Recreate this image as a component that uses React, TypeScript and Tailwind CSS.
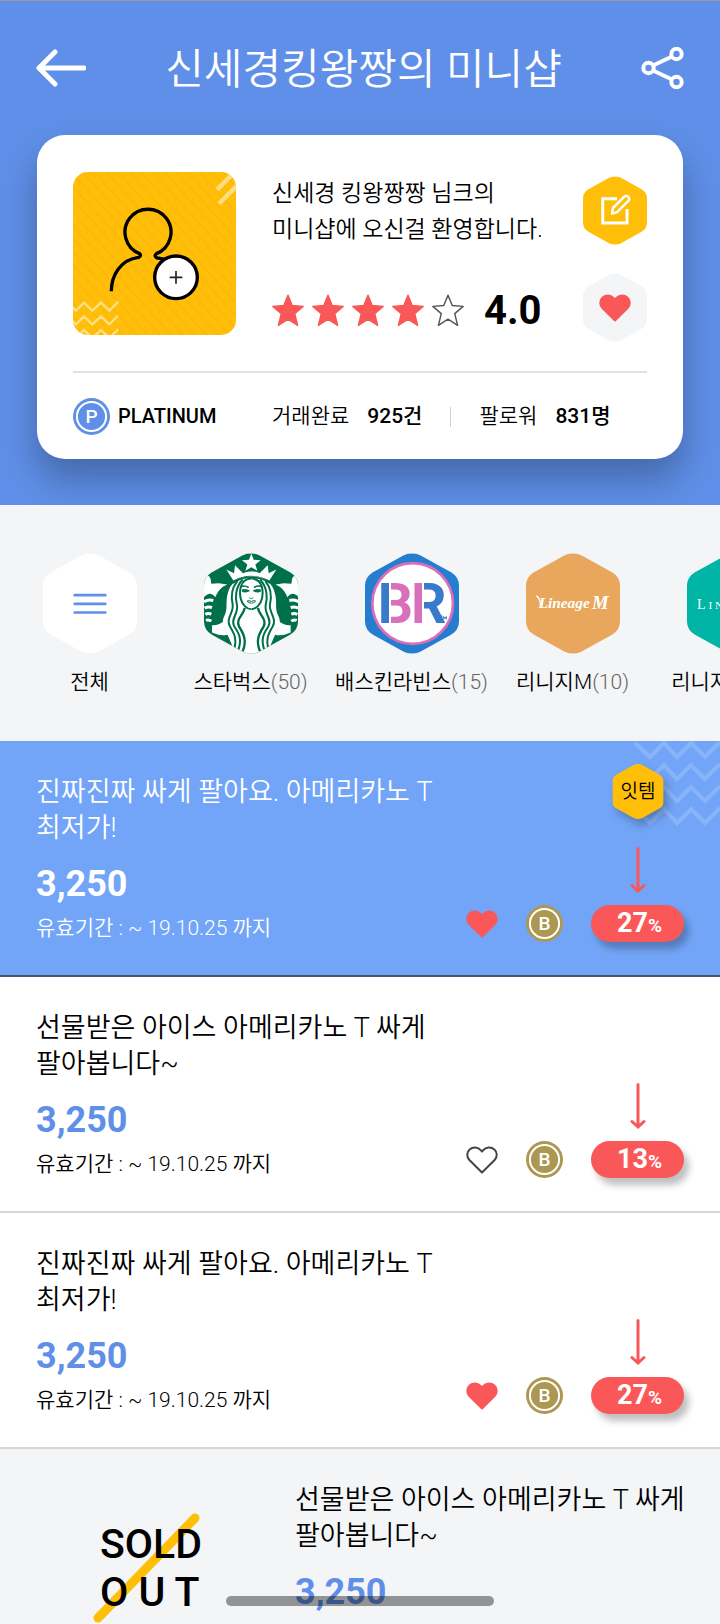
import type { ReactNode } from 'react';

interface Listing {
  title: string;
  price: string;
  expires: string;
  discount: number;
  liked: boolean;
  featured?: boolean;
}

const HEX_PATH =
  'M115 7Q141 -7 167 7L258 57Q282 71 282 98V204Q282 231 258 245L167 295Q141 309 115 295L24 245Q0 231 0 204V98Q0 71 24 57Z';

const listings: Listing[] = [
  {
    title: '진짜진짜 싸게 팔아요. 아메리카노 T 최저가!',
    price: '3,250',
    expires: '유효기간 : ~ 19.10.25 까지',
    discount: 27,
    liked: true,
    featured: true,
  },
  {
    title: '선물받은 아이스 아메리카노 T 싸게 팔아봅니다~',
    price: '3,250',
    expires: '유효기간 : ~ 19.10.25 까지',
    discount: 13,
    liked: false,
  },
  {
    title: '진짜진짜 싸게 팔아요. 아메리카노 T 최저가!',
    price: '3,250',
    expires: '유효기간 : ~ 19.10.25 까지',
    discount: 27,
    liked: true,
  },
];

function Heart({ filled }: { filled: boolean }) {
  return (
    <svg
      viewBox="0 0 32 28"
      className={filled ? 'block w-8 fill-[#f95758] stroke-[#f95758]' : 'block w-8 fill-none stroke-[#444444]'}
      strokeWidth="2"
      strokeLinejoin="round"
    >
      <path d="M16 26.5L3.4 14C0.4 10.8 0.6 6 3.6 3.4C7 0.5 12 0.8 15 4.4L16 5.6L17 4.4C20 0.8 25 0.5 28.4 3.4C31.4 6 31.6 10.8 28.6 14Z" />
    </svg>
  );
}

function Star({ filled }: { filled: boolean }) {
  return (
    <svg
      viewBox="0 0 31 32"
      className={filled ? 'w-8 fill-[#f95758] stroke-[#f95758]' : 'w-8 fill-none stroke-[#555555]'}
      strokeWidth="1.4"
      strokeLinejoin="round"
    >
      <path d="M15.5 1.2L19.6 11.2L30.2 12L22 19L24.8 30.4L15.5 24.4L6.2 30.4L9 19L0.8 12L11.4 11.2Z" />
    </svg>
  );
}

function Coin({ letter, color }: { letter: string; color: string }) {
  return (
    <svg viewBox="0 0 37 37" className="block w-[37px] shrink-0">
      <circle cx="18.5" cy="18.5" r="18.5" fill={color} />
      <circle cx="18.5" cy="18.5" r="14.6" fill="none" stroke="#fff" strokeWidth="2" />
      <text x="18.5" y="25" textAnchor="middle" fontSize="19" fontWeight="500" fill="#fff">
        {letter}
      </text>
    </svg>
  );
}

function DownArrow() {
  return (
    <svg viewBox="0 0 16 46" className="block h-[46px] w-4" fill="none" stroke="#f95758" strokeWidth="3" strokeLinecap="round">
      <path d="M8 1.5V44M2 38.5L8 44L14 38.5" />
    </svg>
  );
}

function Avatar() {
  return (
    <svg viewBox="0 0 489 489" className="block size-[163px] shrink-0 rounded-[15px]">
      <defs>
        <pattern id="dots" width="9" height="26" patternUnits="userSpaceOnUse" patternTransform="rotate(48)">
          <rect x="1" y="2" width="5" height="4" fill="#ffa90c" />
        </pattern>
      </defs>
      <rect width="489" height="489" fill="#ffbf09" />
      <rect width="489" height="489" fill="url(#dots)" />
      <path d="M432 53L490 -5M438 95L495 38" stroke="#ffdf84" strokeWidth="13" />
      <g fill="none" stroke="#ffdf84" strokeWidth="7">
        <path d="M-4 404L9 416L33 392L58 416L84 392L109 416L136 389" />
        <path d="M-4 445L9 457L33 433L58 457L84 433L109 457L136 430" />
        <path d="M-4 486L9 498L33 474L58 498L84 474L109 498L136 471" />
      </g>
      <g fill="none" stroke="#000" strokeWidth="10">
        <path d="M115 358C115 310 142 263 197 256Q206 251 200 245A69 69 0 1 1 250 245Q242 253 252 258L280 263" />
        <circle cx="309" cy="316" r="64" fill="#fff" />
        <path d="M290 316H328M309 297V335" stroke="#222" strokeWidth="5" />
      </g>
    </svg>
  );
}

// one side of the siren, mirrored for the other
function SirenHalf() {
  return (
    <g>
      <path
        d="M143 69C104 70 78 88 71 122C64 150 72 166 62 186C50 208 60 224 70 244C78 260 82 272 88 286L143 306Z"
        fill="#fff"
      />
      <path d="M67 49L90 60L93 36L117 60Q128 54 143 55V68Q112 68 88 82Z" fill="#fff" />
      <path d="M0 80C4 66 10 64 16 70C22 76 20 86 22 92L44 90L70 94C52 100 40 116 34 132C24 118 12 118 0 132Z" fill="#fff" />
      <g fill="none" stroke="#fff" strokeWidth="9">
        <path d="M0 146Q12 138 28 142" />
        <path d="M2 165Q12 159 24 163" />
        <path d="M4 184Q12 179 22 183" />
        <path d="M6 202Q14 198 22 204" />
      </g>
      <path d="M24 216C38 218 50 210 60 204C58 220 64 232 72 244C54 250 40 244 24 238Z" fill="#fff" />
      <g fill="none" stroke="#00704a" strokeWidth="6">
        <path d="M86 90Q108 73 143 72" strokeWidth="5" />
        <path d="M100 84C80 108 82 136 86 154C90 178 64 196 78 220C92 244 98 256 92 284" />
        <path d="M116 79C92 104 94 138 99 156C104 182 78 198 91 220C106 242 114 258 103 290" />
        <path d="M142 76C106 78 106 116 110 136C114 154 128 168 142 168" />
        <path d="M122 164C120 184 94 198 105 220C118 240 130 262 116 294" strokeWidth="7" />
        <path d="M111 101Q120 95 134 103M114 112Q122 107 133 113Q122 118 114 112" strokeWidth="5" />
        <path d="M142 145Q134 140 129 144Q135 150 142 150M136 133Q139 137 142 136" strokeWidth="3" />
      </g>
    </g>
  );
}

function StarbucksLogo() {
  return (
    <g>
      <rect width="282" height="302" fill="#00704a" />
      <SirenHalf />
      <g transform="translate(284 0) scale(-1 1)">
        <SirenHalf />
      </g>
      <path d="M142 1L149 20L170 21L154 34L160 53L142 42L124 53L130 34L114 21L135 20Z" fill="#fff" />
    </g>
  );
}

function BaskinLogo() {
  return (
    <g>
      <defs>
        <linearGradient id="b-split">
          <stop offset="0.32" stopColor="#3a7acb" />
          <stop offset="0.32" stopColor="#fff" />
          <stop offset="0.37" stopColor="#fff" />
          <stop offset="0.37" stopColor="#d970bb" />
        </linearGradient>
        <linearGradient id="r-split">
          <stop offset="0.32" stopColor="#d970bb" />
          <stop offset="0.32" stopColor="#fff" />
          <stop offset="0.37" stopColor="#fff" />
          <stop offset="0.37" stopColor="#3a7acb" />
        </linearGradient>
      </defs>
      <rect width="282" height="302" fill="#257dd0" />
      <circle cx="143" cy="151" r="121" fill="#fff" stroke="#dc6dba" strokeWidth="8" />
      <g fontFamily="'Liberation Sans Narrow', Roboto, sans-serif" fontWeight="700" fontSize="166">
        <text x="38" y="210" fill="url(#b-split)">B</text>
        <text x="138" y="210" fill="url(#r-split)">R</text>
      </g>
      <path d="M224 189H233M228.5 189V199M236 199V190L240 196L244 190V199" fill="none" stroke="#3a7acb" strokeWidth="3" />
    </g>
  );
}

const categories: { name: string; count?: number; art: ReactNode }[] = [
  {
    name: '전체',
    art: (
      <g>
        <rect width="282" height="302" fill="#fff" />
        <path d="M95 126H187M95 152H187M95 178H187" stroke="#5f8fe8" strokeWidth="8" strokeLinecap="round" />
      </g>
    ),
  },
  { name: '스타벅스', count: 50, art: <StarbucksLogo /> },
  { name: '배스킨라빈스', count: 15, art: <BaskinLogo /> },
  {
    name: '리니지M',
    count: 10,
    art: (
      <g>
        <rect width="282" height="302" fill="#e8a75d" />
        <path d="M31 128Q45 136 43 164" stroke="#fff" strokeWidth="4" fill="none" />
        <g fill="#fff" fontFamily="'Liberation Serif', serif" fontStyle="italic" fontWeight="700">
          <text x="38" y="166" fontSize="46">Lineage</text>
          <text x="198" y="168" fontSize="56">M</text>
        </g>
      </g>
    ),
  },
  {
    name: '리니지2M',
    count: 10,
    art: (
      <g>
        <rect width="282" height="302" fill="#00b5a5" />
        <text x="30" y="168" fontSize="34" fill="#fff" fontFamily="'Liberation Serif', serif">
          <tspan fontSize="42">L</tspan> I N E A G E
        </text>
      </g>
    ),
  },
];

function Hexagon({ id, className, children }: { id: string; className: string; children: ReactNode }) {
  return (
    <svg viewBox="0 0 282 302" className={className}>
      <clipPath id={id}>
        <path d={HEX_PATH} />
      </clipPath>
      <g clipPath={`url(#${id})`}>{children}</g>
    </svg>
  );
}

function ProfileCard() {
  return (
    <section className="mx-[37px] rounded-[28px] bg-white px-9 pt-[37px] shadow-[0_20px_36px_rgba(0,0,0,0.28)]">
      <div className="flex">
        <Avatar />
        <div className="ml-9 flex-1 pt-1">
          <p className="text-[23px] leading-9 whitespace-nowrap">
            신세경 킹왕짱짱 님크의
            <br />
            미니샵에 오신걸 환영합니다.
          </p>
          <div className="mt-[41px] flex h-11 items-center gap-2">
            {[1, 2, 3, 4, 5].map((n) => (
              <Star key={n} filled={n <= 4} />
            ))}
            <span className="ml-3 text-[40px] leading-10 font-bold">4.0</span>
          </div>
        </div>
        <div className="flex flex-col gap-7 pt-1">
          <button type="button" aria-label="편집">
            <Hexagon id="hex-edit" className="block h-[69px] w-16">
              <rect width="282" height="302" fill="#ffbf09" />
              <g fill="none" stroke="#fff" strokeWidth="13">
                <path d="M150 99H87V206H194V144" />
                <path d="M128 165L132 140L182 90Q192 82 200 91Q208 100 200 109L150 158Z" strokeWidth="11" strokeLinejoin="round" />
              </g>
            </Hexagon>
          </button>
          <button type="button" aria-label="찜하기" className="grid place-items-center">
            <Hexagon id="hex-like" className="col-start-1 row-start-1 block h-[69px] w-16">
              <rect width="282" height="302" fill="#f3f5f7" />
            </Hexagon>
            <span className="z-10 col-start-1 row-start-1">
              <Heart filled />
            </span>
          </button>
        </div>
      </div>
      <div className="mt-[29px] flex items-center border-t-2 border-[#e2e2e2] py-6 text-[21px] whitespace-nowrap">
        <div className="flex h-[38px] w-[199px] items-center gap-2">
          <Coin letter="P" color="#5f8fe8" />
          <span className="text-[20px] font-medium">PLATINUM</span>
        </div>
        <div className="flex items-center pt-[2px]">
          <span>거래완료</span>
          <strong className="ml-[18px] font-medium">925건</strong>
          <span className="mx-7 h-5 w-px bg-[#d0d0d0]" />
          <span>팔로워</span>
          <strong className="ml-[18px] font-medium">831명</strong>
        </div>
      </div>
    </section>
  );
}

function ListingRow({ item }: { item: Listing }) {
  return (
    <li
      className={
        item.featured
          ? 'relative flex items-end justify-between border-b-2 border-[#4a5568] bg-[#72a5f8] px-9 py-[33px] text-white'
          : 'relative flex items-end justify-between border-b-2 border-[#d6d6d8] bg-white px-9 py-[33px]'
      }
    >
      {item.featured && (
        <>
          <svg viewBox="0 0 86 88" className="absolute top-0 right-0 w-[86px]" fill="none" stroke="#8ab4f9" strokeWidth="4">
            <path d="M1 2L16 16L30 2L43 16L57 2L71 16L86 1" />
            <path d="M10 32L16 38L30 24L43 38L57 24L71 38L86 23" />
            <path d="M2 46L16 60L30 46L43 60L57 46L71 60L86 45" />
            <path d="M2 68L16 82L30 68L43 82L57 68L71 82L86 67" />
          </svg>
          <div className="absolute top-[23px] right-14 grid place-items-center">
            <Hexagon
              id="hex-badge"
              className="col-start-1 row-start-1 block h-[55px] w-[52px] drop-shadow-[4px_6px_4px_rgba(0,0,0,0.25)]"
            >
              <rect width="282" height="302" fill="#ffbf09" />
            </Hexagon>
            <span className="z-10 col-start-1 row-start-1 text-[19px] leading-6 text-black">잇템</span>
          </div>
        </>
      )}
      <div>
        <h2 className="max-w-[400px] text-[27px] leading-9">{item.title}</h2>
        <p className={item.featured ? 'mt-[18px] text-[36px] leading-10 font-bold' : 'mt-[18px] text-[36px] leading-10 font-bold text-[#5f8fe8]'}>
          {item.price}
        </p>
        <p className="mt-[10px] text-[21px] leading-7">{item.expires}</p>
      </div>
      <div className="flex items-end gap-7">
        <button type="button" aria-label="찜하기" className="pb-1">
          <Heart filled={item.liked} />
        </button>
        <Coin letter="B" color="#ad9853" />
        <div className="flex flex-col items-center gap-3">
          <DownArrow />
          <div className="flex h-[37px] w-[93px] items-baseline rounded-full bg-[#f95758] pl-[26px] text-[27px] leading-[37px] font-bold text-white shadow-[5px_7px_7px_rgba(0,0,0,0.25)]">
            <span className="w-[31px]">{item.discount}</span>
            <span className="text-[19px]">%</span>
          </div>
        </div>
      </div>
    </li>
  );
}

export default function App() {
  return (
    <div className="relative h-screen overflow-hidden bg-white font-['Roboto','Noto_Sans_CJK_KR',sans-serif] font-[350] text-black">
      <div className="border-t border-[#9a9a9a] bg-[#5f8fe8] pb-[46px]">
        <header className="flex h-[134px] items-center justify-between px-9 text-white">
          <button type="button" aria-label="뒤로">
            <svg viewBox="0 0 50 38" className="block w-[50px]" fill="none" stroke="#fff" strokeWidth="5" strokeLinecap="round" strokeLinejoin="round">
              <path d="M48 19H3M19 3L3 19L19 35" />
            </svg>
          </button>
          <h1 className="pt-1 text-[42px] leading-[60px] whitespace-nowrap">신세경킹왕짱의 미니샵</h1>
          <button type="button" aria-label="공유">
            <svg viewBox="0 0 43 42" className="block w-[43px]" fill="none" stroke="#fff" strokeWidth="4">
              <circle cx="7.5" cy="21" r="5.2" />
              <circle cx="35.5" cy="7" r="5.2" />
              <circle cx="35.5" cy="35" r="5.2" />
              <path d="M12 18.5L31 9.5M12 23.5L31 32.5" />
            </svg>
          </button>
        </header>
        <ProfileCard />
      </div>

      <nav className="flex overflow-hidden bg-[#f3f5f7] pt-12 pb-[43px] pl-[9px]">
        {categories.map((category, index) => (
          <button key={category.name} type="button" className="flex w-[161px] shrink-0 flex-col items-center">
            <Hexagon id={`hex-category-${index}`} className="block h-[101px] w-[94px]">
              {category.art}
            </Hexagon>
            <span className="mt-3 text-[21px] leading-8 whitespace-nowrap">
              {category.name}
              {category.count && <span className="text-[#666666]">({category.count})</span>}
            </span>
          </button>
        ))}
      </nav>

      <ul>
        {listings.map((item, index) => (
          <ListingRow key={index} item={item} />
        ))}
        <li className="flex bg-[#f3f5f7] py-[33px] pr-6 pl-9">
          <div className="w-[259px] shrink-0 pt-[38px] pl-16">
            <div className="relative w-[100px] text-[41px] leading-[48px] font-medium whitespace-nowrap">
              <svg
                viewBox="0 0 112 112"
                className="absolute -top-2 -left-2 w-[112px]"
                stroke="#ffbf09"
                strokeWidth="9"
                strokeLinecap="round"
              >
                <path d="M6 106L103 6" />
              </svg>
              <span className="relative block">SOLD</span>
              <span className="relative block">O U T</span>
            </div>
          </div>
          <div>
            <h2 className="max-w-[400px] text-[27px] leading-9">선물받은 아이스 아메리카노 T 싸게 팔아봅니다~</h2>
            <p className="mt-[18px] text-[36px] leading-10 font-bold text-[#5f8fe8]">3,250</p>
            <p className="mt-[10px] text-[21px] leading-7">유효기간 : ~ 19.10.25 까지</p>
          </div>
        </li>
      </ul>

      <div className="absolute bottom-[18px] left-1/2 h-[10px] w-[268px] -translate-x-1/2 rounded-full bg-black/40" />
    </div>
  );
}
